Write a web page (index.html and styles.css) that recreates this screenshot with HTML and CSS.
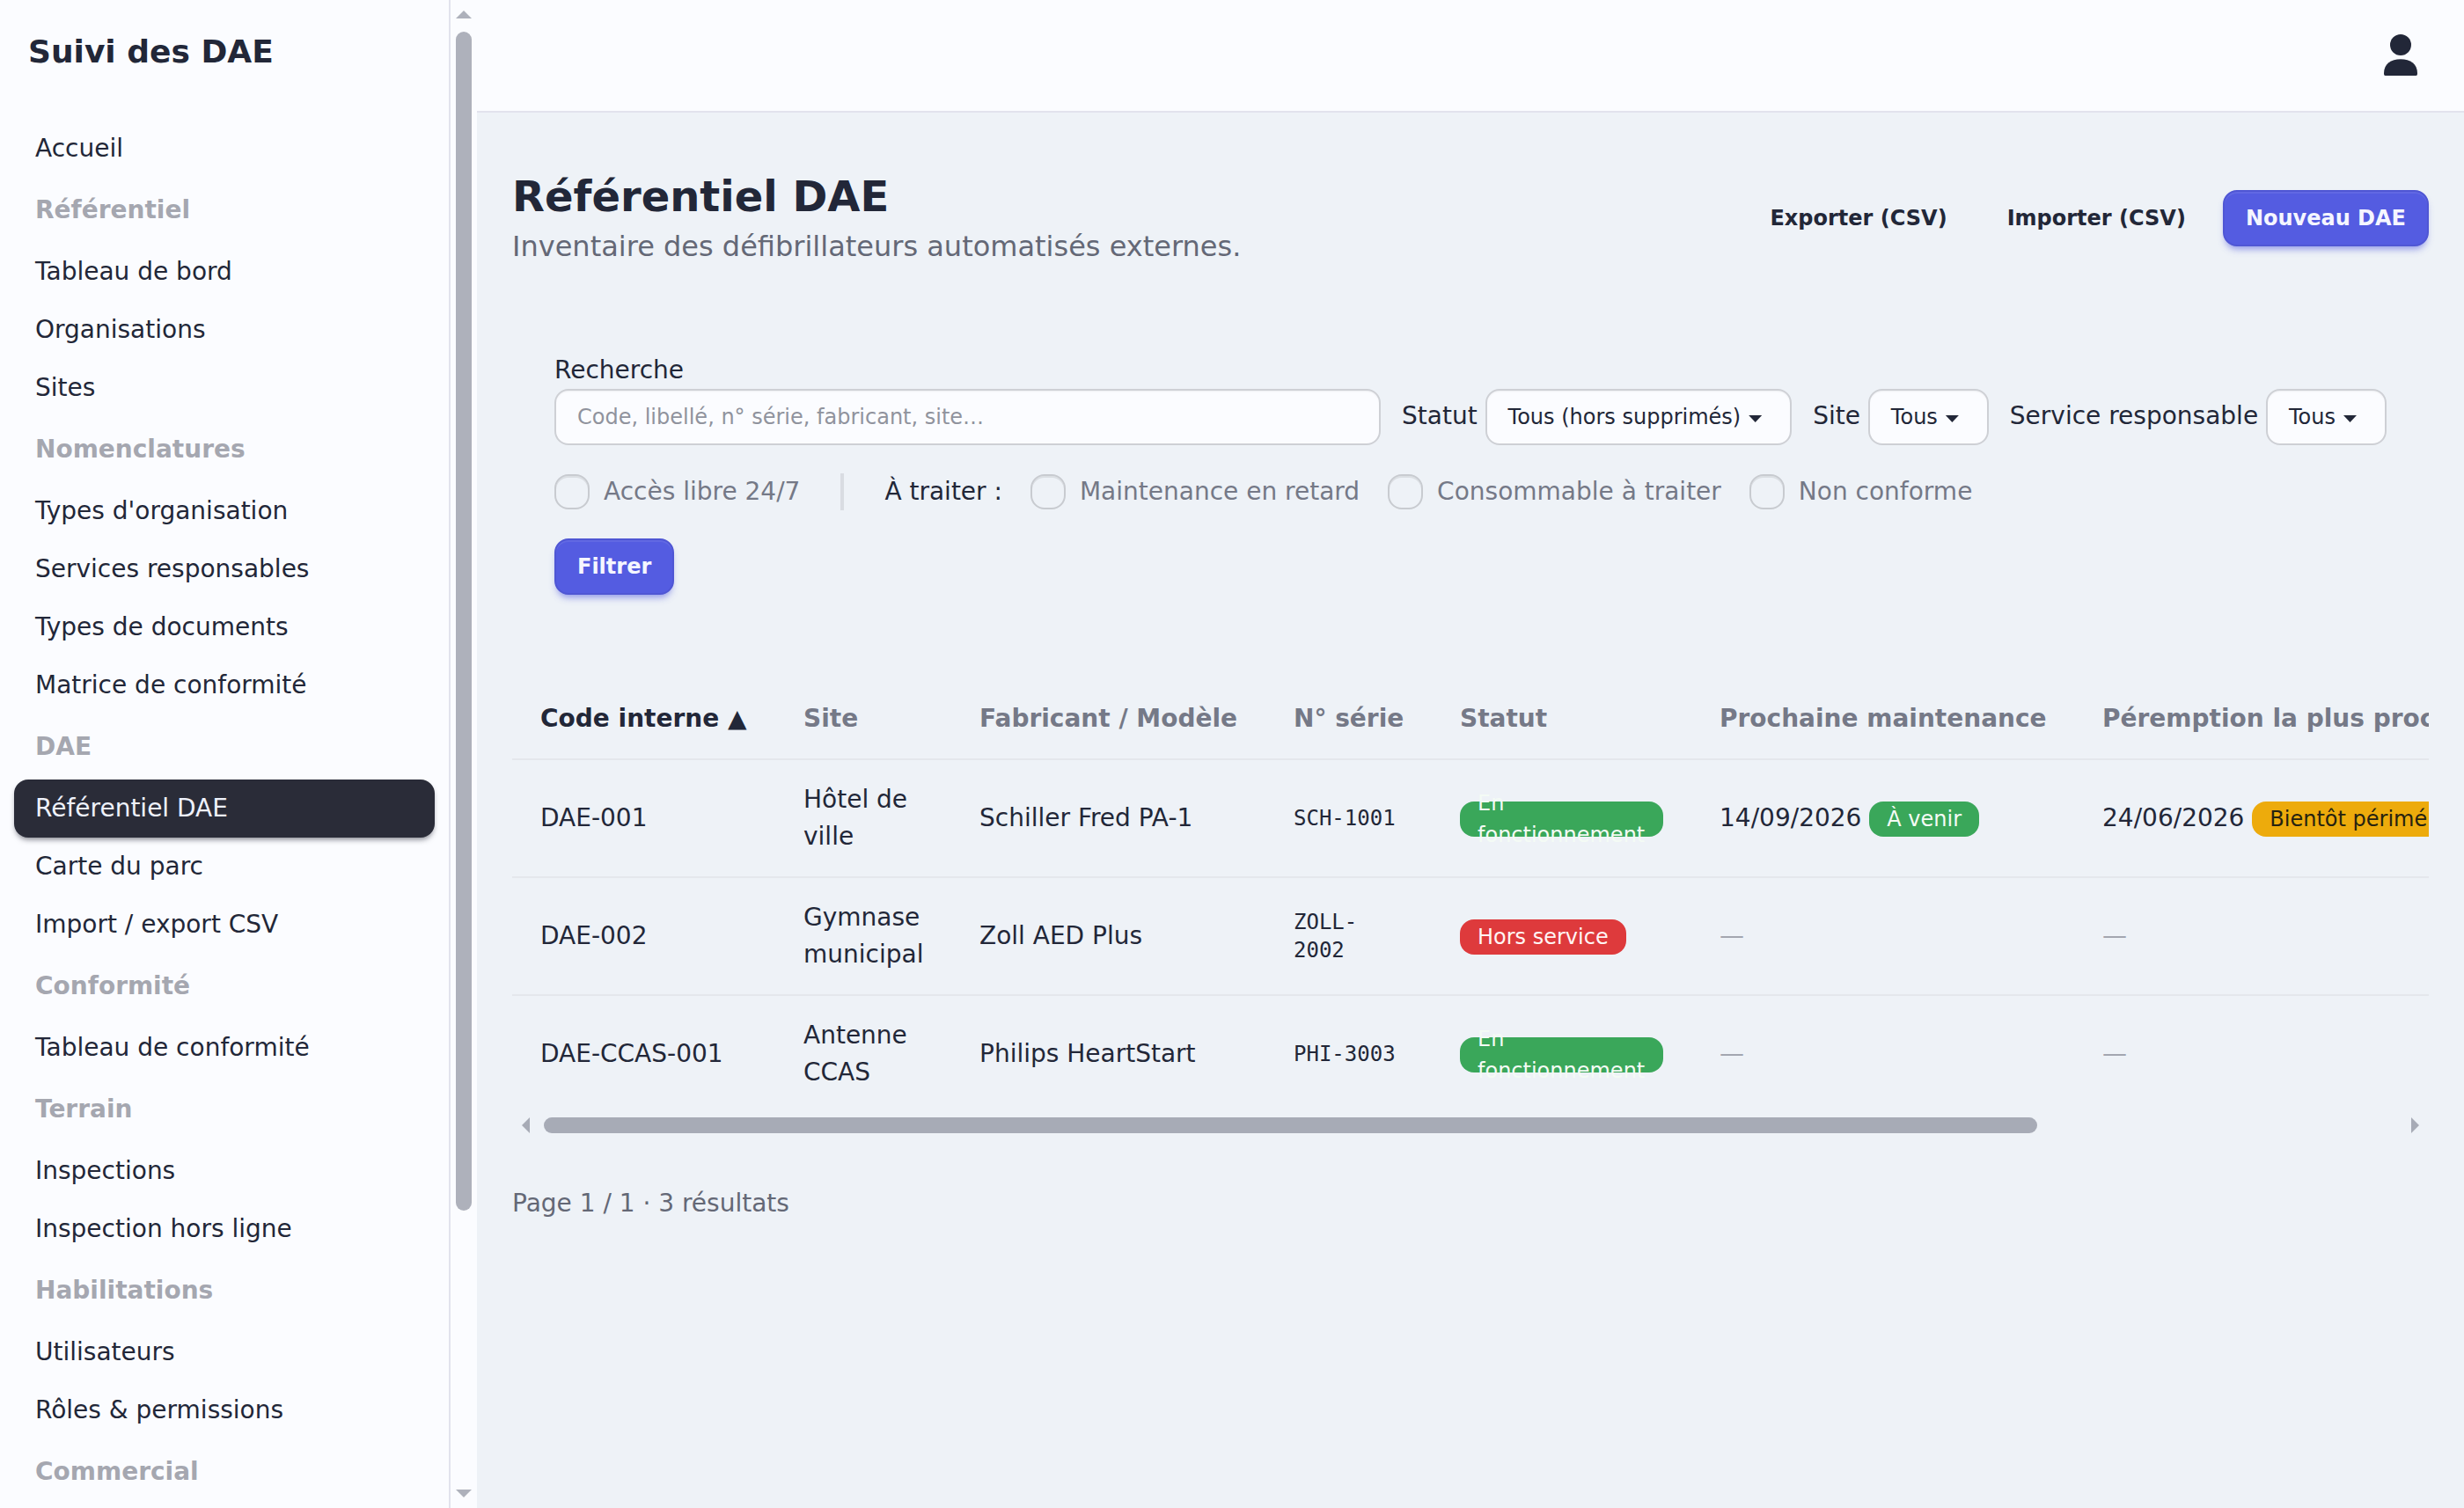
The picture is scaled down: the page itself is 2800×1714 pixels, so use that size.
FILE: index.html
```html
<!DOCTYPE html>
<html lang="fr">
<head>
    <meta charset="UTF-8">
    <meta name="viewport" content="width=device-width, initial-scale=1.0">
    <title>Suivi des DAE</title>
    <link rel="stylesheet" href="styles.css">
</head>
<body>
    <div class="layout">
        <aside class="sidebar">
            <div class="brand">Suivi des DAE</div>
            <ul class="menu">
                <li><a>Accueil</a></li>
                <li class="menu-title">Référentiel</li>
                <li><a>Tableau de bord</a></li>
                <li><a>Organisations</a></li>
                <li><a>Sites</a></li>
                <li class="menu-title">Nomenclatures</li>
                <li><a>Types d'organisation</a></li>
                <li><a>Services responsables</a></li>
                <li><a>Types de documents</a></li>
                <li><a>Matrice de conformité</a></li>
                <li class="menu-title">DAE</li>
                <li><a class="active">Référentiel DAE</a></li>
                <li><a>Carte du parc</a></li>
                <li><a>Import / export CSV</a></li>
                <li class="menu-title">Conformité</li>
                <li><a>Tableau de conformité</a></li>
                <li class="menu-title">Terrain</li>
                <li><a>Inspections</a></li>
                <li><a>Inspection hors ligne</a></li>
                <li class="menu-title">Habilitations</li>
                <li><a>Utilisateurs</a></li>
                <li><a>Rôles &amp; permissions</a></li>
                <li class="menu-title">Commercial</li>
            </ul>
        </aside>
        <div class="scroll-y">
            <span class="arrow-up"></span>
            <span class="thumb"></span>
            <span class="arrow-down"></span>
        </div>

        <div class="page">
            <header class="topbar">
                <svg class="user-icon" viewBox="0 0 48 48" fill="currentColor">
                    <circle cx="24" cy="12" r="12"/>
                    <path d="M5 44C5 34 13 28.300 24 28.300S43 34 43 44v1q0 2-1.500 2H6.500Q5 47 5 45z"/>
                </svg>
            </header>

            <main class="content">
                <div class="page-head">
                    <div>
                        <h1>Référentiel DAE</h1>
                        <p>Inventaire des défibrillateurs automatisés externes.</p>
                    </div>
                    <div class="actions">
                        <a class="btn">Exporter (CSV)</a>
                        <a class="btn">Importer (CSV)</a>
                        <a class="btn btn-primary">Nouveau DAE</a>
                    </div>
                </div>

                <form class="filters">
                    <div class="filter-row">
                        <div class="search">
                            <label for="q">Recherche</label>
                            <input type="text" id="q" placeholder="Code, libellé, n° série, fabricant, site…">
                        </div>
                        <div class="field">Statut <span class="select">Tous (hors supprimés)</span></div>
                        <div class="field">Site <span class="select">Tous</span></div>
                        <div class="field">Service responsable <span class="select">Tous</span></div>
                    </div>
                    <div class="check-row">
                        <label class="check"><span class="checkbox"></span>Accès libre 24/7</label>
                        <span class="divider"></span>
                        <span>À traiter :</span>
                        <label class="check"><span class="checkbox"></span>Maintenance en retard</label>
                        <label class="check"><span class="checkbox"></span>Consommable à traiter</label>
                        <label class="check"><span class="checkbox"></span>Non conforme</label>
                    </div>
                    <a class="btn btn-primary">Filtrer</a>
                </form>

                <div class="table-wrap">
                    <table>
                        <colgroup>
                            <col class="col-code">
                            <col class="col-site">
                            <col class="col-model">
                            <col class="col-serial">
                            <col class="col-status">
                            <col class="col-maint">
                            <col>
                        </colgroup>
                        <thead>
                            <tr>
                                <th class="sorted">Code interne ▲</th>
                                <th>Site</th>
                                <th>Fabricant / Modèle</th>
                                <th>N° série</th>
                                <th>Statut</th>
                                <th>Prochaine maintenance</th>
                                <th>Péremption la plus proche</th>
                            </tr>
                        </thead>
                        <tbody>
                            <tr>
                                <td>DAE-001</td>
                                <td>Hôtel de ville</td>
                                <td>Schiller Fred PA-1</td>
                                <td class="mono">SCH-1001</td>
                                <td><span class="badge success">En fonctionnement</span></td>
                                <td class="nowrap">14/09/2026 <span class="badge success">À venir</span></td>
                                <td class="nowrap">24/06/2026 <span class="badge warning">Bientôt périmé</span></td>
                            </tr>
                            <tr>
                                <td>DAE-002</td>
                                <td>Gymnase municipal</td>
                                <td>Zoll AED Plus</td>
                                <td class="mono">ZOLL-2002</td>
                                <td><span class="badge error">Hors service</span></td>
                                <td class="empty">—</td>
                                <td class="empty">—</td>
                            </tr>
                            <tr>
                                <td>DAE-CCAS-001</td>
                                <td>Antenne CCAS</td>
                                <td>Philips HeartStart</td>
                                <td class="mono">PHI-3003</td>
                                <td><span class="badge success">En fonctionnement</span></td>
                                <td class="empty">—</td>
                                <td class="empty">—</td>
                            </tr>
                        </tbody>
                    </table>
                </div>
                <div class="scroll-x">
                    <span class="arrow-left"></span>
                    <span class="thumb"></span>
                    <span class="arrow-right"></span>
                </div>

                <p class="pager">Page 1 / 1 · 3 résultats</p>
            </main>
        </div>
    </div>
</body>
</html>
```
FILE: styles.css
```css
* {
    box-sizing: border-box;
}

body, html {
    margin: 0;
    padding: 0;
    height: 100%;
    overflow: hidden;
    font-family: 'DejaVu Sans', sans-serif;
    font-size: 28px;
    line-height: 42px;
    color: #222738;
    background: #eef2f7;
}

h1, p, ul {
    margin: 0;
    padding: 0;
}

.layout {
    display: flex;
    height: 100%;
}

/* Sidebar */
.sidebar {
    width: 512px;
    flex-shrink: 0;
    overflow: hidden;
    background: #fbfcff;
    border-right: 2px solid #e2e3ed;
}

.brand {
    padding: 31px 32px 33px;
    font-size: 36px;
    line-height: 56px;
    font-weight: bold;
}

.menu {
    list-style: none;
    padding: 16px;
}

.menu a {
    display: block;
    padding: 12px 24px;
    border-radius: 16px;
}

.menu a.active {
    background: #2a2c38;
    color: #eef1fb;
    box-shadow: 0 4px 6px -2px rgba(42, 44, 56, 0.6);
}

.menu-title {
    padding: 16px 24px;
    font-weight: bold;
    color: #a5a7b0;
}

/* Scrollbars */
.scroll-y {
    display: flex;
    flex-direction: column;
    align-items: center;
    width: 30px;
    flex-shrink: 0;
    padding: 12px 0;
    background: #fbfcff;
}

.scroll-y .thumb {
    width: 18px;
    height: 1340px;
    margin: 15px 0 auto;
    border-radius: 9px;
    background: #aeb1bb;
}

.arrow-up, .arrow-down {
    width: 18px;
    height: 9px;
    background: #aeb1bb;
    clip-path: polygon(50% 0, 100% 100%, 0 100%);
}

.arrow-down {
    clip-path: polygon(0 0, 100% 0, 50% 100%);
}

.scroll-x {
    display: flex;
    align-items: center;
    height: 30px;
    padding: 0 11px;
}

.scroll-x .thumb {
    width: 1697px;
    height: 18px;
    margin: 0 auto 0 16px;
    border-radius: 9px;
    background: #a7abb6;
}

.arrow-left, .arrow-right {
    width: 9px;
    height: 18px;
    background: #a7abb6;
    clip-path: polygon(100% 0, 100% 100%, 0 50%);
}

.arrow-right {
    clip-path: polygon(0 0, 100% 50%, 0 100%);
}

/* Page */
.page {
    flex: 1;
    min-width: 0;
}

.topbar {
    display: flex;
    justify-content: flex-end;
    align-items: center;
    height: 128px;
    padding-right: 48px;
    background: #fbfcff;
    border-bottom: 2px solid #e2e3ed;
}

.user-icon {
    width: 48px;
    height: 48px;
}

.content {
    padding: 64px 40px;
}

.page-head {
    display: flex;
    justify-content: space-between;
    align-items: center;
}

h1 {
    padding-bottom: 2px;
    font-size: 48px;
    line-height: 62px;
}

.page-head p {
    font-size: 32px;
    line-height: 48px;
    color: #646876;
}

.actions {
    display: flex;
    gap: 16px;
}

.btn {
    display: inline-flex;
    align-items: center;
    height: 64px;
    padding: 0 24px;
    border: 2px solid transparent;
    border-radius: 16px;
    font-size: 24px;
    font-weight: bold;
}

.btn-primary {
    background: #545ce1;
    border-color: #4f56d4;
    color: #f5f6ff;
    box-shadow: inset 0 2px 0 rgba(255, 255, 255, 0.08), 0 6px 6px -4px rgba(84, 92, 225, 0.4), 0 6px 8px -2px rgba(84, 92, 225, 0.3);
}

/* Filters */
.filters {
    display: flex;
    flex-direction: column;
    align-items: flex-start;
    gap: 32px;
    padding: 96px 48px;
}

.filter-row {
    display: flex;
    align-items: flex-end;
    gap: 24px;
    width: 100%;
}

.search {
    flex: 1;
}

.search label {
    display: block;
}

.search input, .select {
    height: 64px;
    padding: 0 24px;
    border: 2px solid #ced0d5;
    border-radius: 16px;
    background: #fbfcff;
    box-shadow: inset 0 2px 2px -1px rgba(0, 0, 0, 0.06);
    font: 24px 'DejaVu Sans', sans-serif;
}

.search input {
    display: block;
    width: 100%;
}

.search input::placeholder {
    color: #90939d;
}

.field {
    height: 64px;
    white-space: nowrap;
}

.select {
    display: inline-flex;
    align-items: center;
    padding-right: 32px;
}

.select::after {
    content: "";
    width: 15px;
    height: 8px;
    margin: 4px 0 0 9px;
    background: #222738;
    clip-path: polygon(0 0, 100% 0, 50% 100%);
}

.check-row {
    display: flex;
    align-items: center;
    gap: 32px;
}

.check {
    display: flex;
    align-items: center;
    gap: 16px;
    color: #757987;
}

.checkbox {
    width: 40px;
    height: 40px;
    border: 2px solid #c8cbd0;
    border-radius: 16px;
    box-shadow: inset 0 2px 0 rgba(0, 0, 0, 0.08);
}

.divider {
    width: 4px;
    height: 42px;
    margin: 0 14px;
    background: #d9dce2;
}

/* Table */
.table-wrap {
    overflow: hidden;
}

table {
    width: 2592px;
    table-layout: fixed;
    border-collapse: separate;
    border-spacing: 0;
}

.col-code { width: 299px; }
.col-site { width: 200px; }
.col-model { width: 357px; }
.col-serial { width: 189px; }
.col-status { width: 295px; }
.col-maint { width: 435px; }

th, td {
    padding: 24px 32px;
    text-align: left;
    vertical-align: middle;
    border-bottom: 2px solid #e4e7ec;
}

th {
    white-space: nowrap;
    color: #757987;
}

th.sorted {
    color: #222738;
}

tbody tr:last-child td {
    border-bottom: none;
}

.mono {
    font-family: 'DejaVu Sans Mono', monospace;
    font-size: 24px;
    line-height: 32px;
}

.nowrap {
    white-space: nowrap;
}

.empty {
    color: #a3a6b0;
}

.badge {
    display: inline-flex;
    align-items: center;
    height: 40px;
    padding: 0 20px;
    border-radius: 16px;
    font-size: 24px;
    line-height: 36px;
    vertical-align: middle;
}

.success {
    background: #3aa75a;
    color: #f4fbf5;
}

.error {
    background: #de3a3c;
    color: #fff5f4;
}

.warning {
    background: #edab0c;
    color: #262210;
}

.pager {
    margin-top: 53px;
    color: #646876;
}
```
